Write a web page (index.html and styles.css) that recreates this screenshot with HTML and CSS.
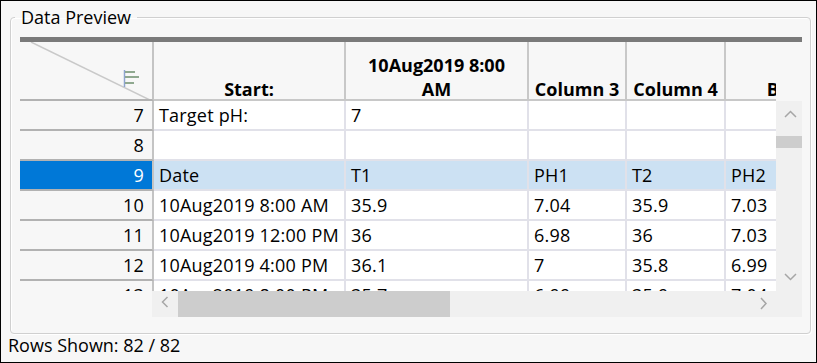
FILE: index.html
```html
<!DOCTYPE html>
<html lang="en">
<head>
    <meta charset="UTF-8">
    <title>Data Preview</title>
    <link rel="stylesheet" href="styles.css">
</head>
<body>
    <div class="window">
        <fieldset class="group">
            <legend>Data Preview</legend>
            <div class="view">
                <div class="view-bar"></div>
                <div class="sheet">
                    <div class="row head">
                        <div class="cell corner">
                            <svg width="132" height="57" viewBox="0 0 132 57">
                                <line x1="11" y1="0" x2="132" y2="59" stroke="#c9c9c9" stroke-width="1.5"/>
                                <line x1="104.5" y1="28" x2="104.5" y2="45" stroke="#8ea4cf" stroke-width="1.5"/>
                                <rect x="105" y="29" width="10" height="2" fill="#8fa88f"/>
                                <rect x="105" y="34" width="14" height="2" fill="#8fa88f"/>
                                <rect x="105" y="40" width="9" height="2" fill="#8fa88f"/>
                            </svg>
                        </div>
                        <div class="cell"><span>Start:</span></div>
                        <div class="cell wide"><span>10Aug2019 8:00 AM</span></div>
                        <div class="cell"><span>Column 3</span></div>
                        <div class="cell"><span>Column 4</span></div>
                        <div class="cell"><span>By</span></div>
                    </div>
                    <div class="row">
                        <div class="cell num">7</div>
                        <div class="cell">Target pH:</div>
                        <div class="cell">7</div>
                        <div class="cell"></div>
                        <div class="cell"></div>
                        <div class="cell"></div>
                    </div>
                    <div class="row">
                        <div class="cell num">8</div>
                        <div class="cell"></div>
                        <div class="cell"></div>
                        <div class="cell"></div>
                        <div class="cell"></div>
                        <div class="cell"></div>
                    </div>
                    <div class="row selected">
                        <div class="cell num">9</div>
                        <div class="cell">Date</div>
                        <div class="cell">T1</div>
                        <div class="cell">PH1</div>
                        <div class="cell">T2</div>
                        <div class="cell">PH2</div>
                    </div>
                    <div class="row">
                        <div class="cell num">10</div>
                        <div class="cell">10Aug2019 8:00 AM</div>
                        <div class="cell">35.9</div>
                        <div class="cell">7.04</div>
                        <div class="cell">35.9</div>
                        <div class="cell">7.03</div>
                    </div>
                    <div class="row">
                        <div class="cell num">11</div>
                        <div class="cell">10Aug2019 12:00 PM</div>
                        <div class="cell">36</div>
                        <div class="cell">6.98</div>
                        <div class="cell">36</div>
                        <div class="cell">7.03</div>
                    </div>
                    <div class="row">
                        <div class="cell num">12</div>
                        <div class="cell">10Aug2019 4:00 PM</div>
                        <div class="cell">36.1</div>
                        <div class="cell">7</div>
                        <div class="cell">35.8</div>
                        <div class="cell">6.99</div>
                    </div>
                    <div class="row">
                        <div class="cell num">13</div>
                        <div class="cell">10Aug2019 8:00 PM</div>
                        <div class="cell">35.7</div>
                        <div class="cell">6.99</div>
                        <div class="cell">35.9</div>
                        <div class="cell">7.04</div>
                    </div>
                </div>
                <div class="vscroll">
                    <div class="sb-btn">
                        <svg width="26" height="26"><polyline points="9,16 14.5,10.5 20,16" fill="none" stroke="#a6a6a6" stroke-width="1.5"/></svg>
                    </div>
                    <div class="sb-track"><div class="vthumb"></div></div>
                    <div class="sb-btn">
                        <svg width="26" height="26"><polyline points="9,9 14.5,14.5 20,9" fill="none" stroke="#a6a6a6" stroke-width="1.5"/></svg>
                    </div>
                </div>
                <div class="hscroll">
                    <div class="hs-gap"></div>
                    <div class="sb-btn">
                        <svg width="26" height="26"><polyline points="15.5,6 10.5,11 15.5,16" fill="none" stroke="#a6a6a6" stroke-width="1.5"/></svg>
                    </div>
                    <div class="hthumb"></div>
                    <div class="sb-track"></div>
                    <div class="sb-btn">
                        <svg width="26" height="26"><polyline points="11,7 16,12.5 11,18" fill="none" stroke="#a6a6a6" stroke-width="1.5"/></svg>
                    </div>
                    <div class="sb-track"></div>
                </div>
            </div>
        </fieldset>
        <div class="status">Rows Shown: 82 / 82</div>
    </div>
</body>
</html>
```

FILE: styles.css
```css
*{
    box-sizing: border-box;
}
body{
    margin: 0;
    font-family: "Open Sans", "Noto Sans", sans-serif;
    font-size: 18px;
    color: #000;
}
.window{
    width: 817px;
    height: 363px;
    border: 1px solid #000;
    background: #f7f7f7;
    overflow: hidden;
}
.group{
    margin: 5px 5px 0 9px;
    padding: 0 0 16px 9px;
    min-width: 0;
    border: 1px solid #d0d0d0;
    border-radius: 4px;
    box-shadow: inset 1px 1px 0 #fff, 1px 1px 0 #fff;
}
.group > legend{
    margin-left: -5px;
    padding: 0 6px;
    line-height: 22px;
}
.view{
    display: grid;
    grid-template-columns: 756px 26px;
    grid-template-rows: 5px 249px 26px;
    margin-top: 9px;
}
.view-bar{
    grid-column: 1 / 3;
    background: #7a7a7a;
}
.sheet{
    overflow: hidden;
}
.row{
    display: grid;
    grid-template-columns: 134px 192px 183px 98px 99px 106px;
    width: max-content;
    height: 30px;
}
.cell{
    padding: 0 5px;
    line-height: 28px;
    letter-spacing: 0.2px;
    white-space: nowrap;
    overflow: hidden;
    background: #fff;
    border-right: 2px solid #e1e1e9;
    border-bottom: 2px solid #e1e1e9;
}
.cell.num{
    padding-right: 8px;
    text-align: right;
    background: #f7f7f7;
    border-right-color: #c4c4c4;
    border-bottom-color: #b2b2b2;
}
.row.selected .cell{
    background: #cce1f3;
}
.row.selected .cell.num{
    background: #0078d7;
    color: #fff;
}
.row.head{
    height: 59px;
}
.row.head .cell{
    display: flex;
    align-items: flex-end;
    justify-content: center;
    padding: 0 4px;
    line-height: 24px;
    letter-spacing: 0;
    text-align: center;
    white-space: normal;
    overflow: visible;
    font-weight: bold;
    background: #f7f7f7;
    border-color: #c8c8c8;
}
.row.head .cell > span{
    margin-bottom: -2px;
}
.row.head .cell.wide{
    padding: 0 20px;
}
.row.head .cell.corner{
    padding: 0;
    display: block;
    border-right-color: #c4c4c4;
    border-bottom-color: #b2b2b2;
}
.corner svg{
    display: block;
}
.vscroll{
    display: flex;
    flex-direction: column;
    margin-top: 59px;
    background: #f0f0f0;
}
.vscroll > .sb-track{
    flex: 1;
    padding-top: 9px;
}
.vthumb{
    height: 12px;
    background: #cdcdcd;
}
.sb-btn{
    width: 26px;
    height: 26px;
    background: #f0f0f0;
}
.sb-btn svg{
    display: block;
}
.sb-track{
    background: #f0f0f0;
}
.hscroll{
    grid-column: 1 / 3;
    display: grid;
    grid-template-columns: 132px 26px 272px 1fr 26px 26px;
}
.hthumb{
    background: #cdcdcd;
}
.status{
    padding-left: 7px;
    line-height: 22px;
}
```
